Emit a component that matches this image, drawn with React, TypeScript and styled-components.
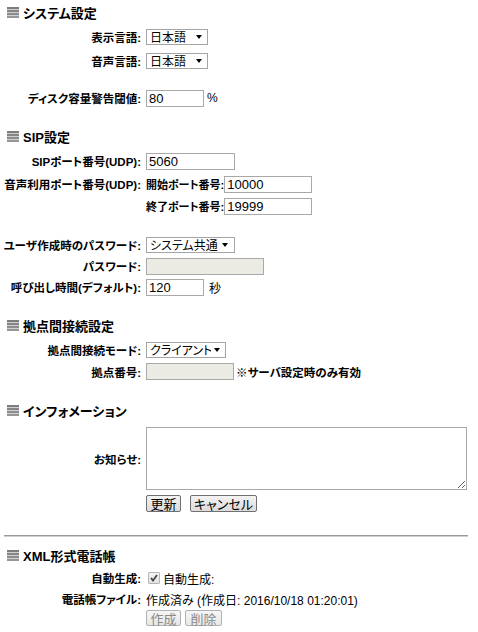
import React from "react";
import styled, { createGlobalStyle } from "styled-components";

const GlobalStyle = createGlobalStyle`
  html, body { margin: 0; padding: 0; background: #fff; }
  body {
    font-family: "Liberation Sans", "Noto Sans CJK JP", sans-serif;
    font-size: 12px;
    color: #000;
    font-feature-settings: "palt";
  }
`;

const Page = styled.div`
  width: 478px;
  box-sizing: border-box;
  padding: 0 0 0 3px;
`;

const SectionTitle = styled.h2<{ $mt?: number }>`
  display: flex;
  align-items: center;
  gap: 4px;
  height: 25px;
  margin: ${(p) => p.$mt ?? 0}px 0 0 4px;
  padding: 0;
  font-size: 13px;
  font-weight: bold;
  color: #000;
`;

const Row = styled.div<{ $h: number; $mt?: number }>`
  display: flex;
  align-items: center;
  height: ${(p) => p.$h}px;
  margin-top: ${(p) => p.$mt ?? 0}px;
`;

const Label = styled.div`
  flex: 0 0 138px;
  min-width: 0;
  display: flex;
  justify-content: flex-end;
  margin-right: 5px;
  font-size: 11.5px;
  font-weight: bold;
  white-space: nowrap;
`;

const Field = styled.div<{ $gap?: number }>`
  display: flex;
  align-items: center;
  gap: ${(p) => p.$gap ?? 0}px;
  white-space: nowrap;
`;

const SubLabel = styled.span`
  flex: 0 0 77px;
  font-size: 11px;
  font-weight: bold;
  overflow: visible;
`;

const Unit = styled.span<{ $ml: number; $bold?: boolean }>`
  margin-left: ${(p) => p.$ml}px;
  font-size: ${(p) => (p.$bold ? 11.5 : 12)}px;
  font-weight: ${(p) => (p.$bold ? "bold" : "normal")};
`;

const TextInput = styled.input<{ $w: number }>`
  box-sizing: border-box;
  width: ${(p) => p.$w}px;
  height: 17px;
  margin: 0;
  padding: 0 2px;
  border: 1px solid #a9a9a9;
  border-radius: 0;
  background: #fff;
  font: 13px "Liberation Sans", sans-serif;
  color: #000;
  outline: none;
  &:disabled {
    background: #ebebe4;
  }
`;

const SelectWrap = styled.div<{ $w: number }>`
  position: relative;
  width: ${(p) => p.$w}px;
  height: 16px;
`;

const Select = styled.select`
  appearance: none;
  box-sizing: border-box;
  width: 100%;
  height: 100%;
  margin: 0;
  padding: 0 14px 0 3px;
  border: 1px solid #a5a5a5;
  border-radius: 0;
  background: #fff;
  font: 12px "Noto Sans CJK JP", sans-serif;
  font-feature-settings: "palt";
  line-height: 14px;
  color: #000;
  outline: none;
`;

const Arrow = styled.svg<{ $r: number }>`
  position: absolute;
  right: ${(p) => p.$r}px;
  top: 6px;
  pointer-events: none;
`;

const TextArea = styled.textarea`
  box-sizing: border-box;
  width: 321px;
  height: 63px;
  margin: 0;
  border: 1px solid #a9a9a9;
  border-radius: 0;
  font: 13px "Liberation Sans", sans-serif;
  outline: none;
`;

const Button = styled.button<{ $w: number; $h?: number }>`
  box-sizing: border-box;
  width: ${(p) => p.$w}px;
  height: ${(p) => p.$h ?? 17}px;
  margin: 0;
  padding: 0;
  border: 1px solid #707070;
  border-radius: 2px;
  background: linear-gradient(#f3f3f3, #dcdcdc);
  font: 13px "Noto Sans CJK JP", sans-serif;
  font-feature-settings: "palt";
  line-height: 13px;
  color: #000;
  &:disabled {
    color: #8a8a8a;
    border-color: #adb2b5;
    background: linear-gradient(#f6f6f6, #e8e8e8);
  }
`;

const CheckWrap = styled.span`
  position: relative;
  display: inline-block;
  width: 12px;
  height: 12px;
  margin: 0 3px 0 2px;
`;

const Check = styled.input`
  appearance: none;
  box-sizing: border-box;
  display: block;
  width: 12px;
  height: 12px;
  margin: 0;
  border: 1px solid #b5b5b5;
  border-radius: 1px;
  background: linear-gradient(#f4f4f4, #e2e2e2);
`;

const CheckMark = styled.svg`
  position: absolute;
  left: 2px;
  top: 2px;
  pointer-events: none;
`;

const Value = styled.span`
  font-weight: normal;
`;

const Divider = styled.hr`
  margin: 23px 10px 0 1px;
  height: 0;
  border: 0;
  border-top: 1px solid #9a9a9a;
  border-bottom: 1px solid #d0d0d0;
`;

const BarsIcon = () => (
  <svg width="12" height="11" viewBox="0 0 12 11">
    <rect x="0" y="0" width="12" height="11" fill="#cfcfcf" />
    <rect x="0" y="0" width="12" height="2" fill="#7d7d7d" />
    <rect x="0" y="3" width="12" height="2" fill="#858585" />
    <rect x="0" y="6" width="12" height="2" fill="#8d8d8d" />
    <rect x="0" y="9" width="12" height="2" fill="#969696" />
  </svg>
);

const SelectBox = ({ w, r, value }: { w: number; r: number; value: string }) => (
  <SelectWrap $w={w}>
    <Select defaultValue={value}>
      <option>{value}</option>
    </Select>
    <Arrow $r={r} width="6" height="4" viewBox="0 0 6 4">
      <path d="M0 0 H6 L3 4 Z" fill="#000" />
    </Arrow>
  </SelectWrap>
);

export default function App() {
  return (
    <>
      <GlobalStyle />
      <Page>
        <SectionTitle>
          <BarsIcon />
          システム設定
        </SectionTitle>
        <Row $h={24}>
          <Label>表示言語:</Label>
          <Field>
            <SelectBox w={62} r={6} value="日本語" />
          </Field>
        </Row>
        <Row $h={24}>
          <Label>音声言語:</Label>
          <Field>
            <SelectBox w={62} r={6} value="日本語" />
          </Field>
        </Row>
        <Row $h={24} $mt={13}>
          <Label>ディスク容量警告閾値:</Label>
          <Field>
            <TextInput $w={58} defaultValue="80" />
            <Unit $ml={3}>%</Unit>
          </Field>
        </Row>

        <SectionTitle $mt={14}>
          <BarsIcon />
          SIP設定
        </SectionTitle>
        <Row $h={24}>
          <Label>SIPポート番号(UDP):</Label>
          <Field>
            <TextInput $w={89} defaultValue="5060" />
          </Field>
        </Row>
        <Row $h={22}>
          <Label>音声利用ポート番号(UDP):</Label>
          <Field>
            <SubLabel>開始ポート番号:</SubLabel>
            <TextInput $w={88} defaultValue="10000" />
          </Field>
        </Row>
        <Row $h={22}>
          <Label />
          <Field>
            <SubLabel>終了ポート番号:</SubLabel>
            <TextInput $w={88} defaultValue="19999" />
          </Field>
        </Row>
        <Row $h={22} $mt={17}>
          <Label>ユーザ作成時のパスワード:</Label>
          <Field>
            <SelectBox w={89} r={7} value="システム共通" />
          </Field>
        </Row>
        <Row $h={20}>
          <Label>パスワード:</Label>
          <Field>
            <TextInput $w={118} disabled />
          </Field>
        </Row>
        <Row $h={22}>
          <Label>呼び出し時間(デフォルト):</Label>
          <Field>
            <TextInput $w={58} defaultValue="120" />
            <Unit $ml={5}>秒</Unit>
          </Field>
        </Row>

        <SectionTitle $mt={15}>
          <BarsIcon />
          拠点間接続設定
        </SectionTitle>
        <Row $h={24}>
          <Label>拠点間接続モード:</Label>
          <Field>
            <SelectBox w={80} r={6} value="クライアント" />
          </Field>
        </Row>
        <Row $h={19}>
          <Label>拠点番号:</Label>
          <Field>
            <TextInput $w={88} disabled />
            <Unit $ml={2} $bold>
              ※サーバ設定時のみ有効
            </Unit>
          </Field>
        </Row>

        <SectionTitle $mt={17}>
          <BarsIcon />
          インフォメーション
        </SectionTitle>
        <Row $h={63} $mt={4}>
          <Label>お知らせ:</Label>
          <Field>
            <TextArea />
          </Field>
        </Row>
        <Row $h={17} $mt={5}>
          <Label />
          <Field $gap={9}>
            <Button $w={35}>更新</Button>
            <Button $w={67}>キャンセル</Button>
          </Field>
        </Row>

        <Divider />

        <SectionTitle $mt={6}>
          <BarsIcon />
          XML形式電話帳
        </SectionTitle>
        <Row $h={20}>
          <Label>自動生成:</Label>
          <Field>
            <CheckWrap>
              <Check type="checkbox" defaultChecked disabled />
              <CheckMark width="8" height="8" viewBox="0 0 8 8">
                <path d="M1 4 L3 6.5 L7 1" stroke="#444" strokeWidth="1.8" fill="none" />
              </CheckMark>
            </CheckWrap>
            <Value>自動生成:</Value>
          </Field>
        </Row>
        <Row $h={22}>
          <Label>電話帳ファイル:</Label>
          <Field>
            <Value>作成済み (作成日: 2016/10/18 01:20:01)</Value>
          </Field>
        </Row>
        <Row $h={16}>
          <Label />
          <Field $gap={4}>
            <Button $w={35} $h={16} disabled>
              作成
            </Button>
            <Button $w={37} $h={16} disabled>
              削除
            </Button>
          </Field>
        </Row>
      </Page>
    </>
  );
}
